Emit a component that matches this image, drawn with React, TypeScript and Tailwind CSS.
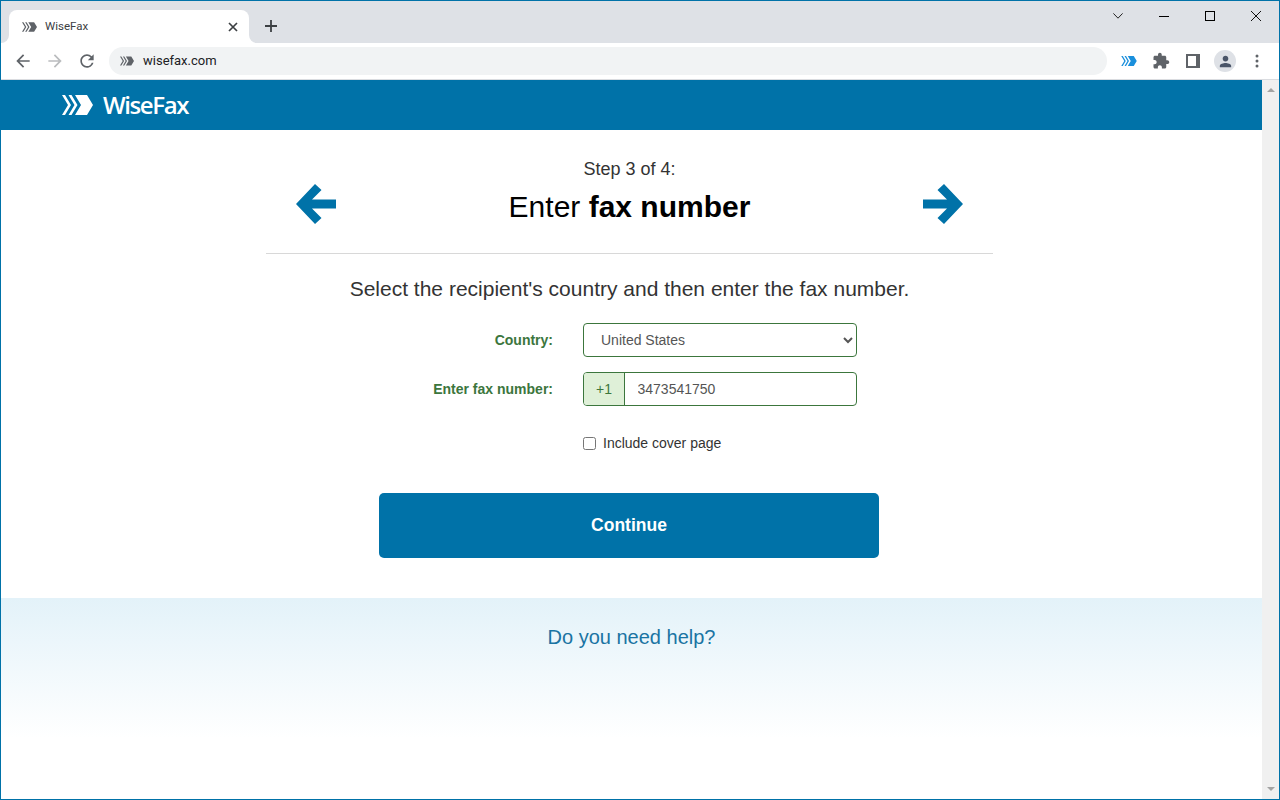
import { ReactNode } from 'react';

function Logo({ className, fill }: { className: string; fill: string }) {
  return (
    <svg viewBox="0 0 31 20" className={className} fill={fill}>
      <path d="M0 0h3l6 10-6 10H0l6-10z" />
      <path d="M6.5 0h3l6 10-6 10h-3l6-10z" />
      <path d="M13 0h12l6 10-6 10H13l6-10z" />
    </svg>
  );
}

function ToolIcon({ d, size, color }: { d: string; size: number; color: string }) {
  return (
    <svg viewBox="0 0 24 24" width={size} height={size} fill={color}>
      <path d={d} />
    </svg>
  );
}

function ToolSlot({ children }: { children: ReactNode }) {
  return <div className="w-[32px] h-[32px] shrink-0 flex items-center justify-center">{children}</div>;
}

function BigArrow({ flip }: { flip?: boolean }) {
  return (
    <svg viewBox="0 0 40 40" className={`mt-[25px] w-[40px] h-[40px] ${flip ? '-scale-x-100' : ''}`} fill="#0072a8">
      <path d="M0 20 19 0l6.500 6-9.500 9.500H40v9H16l9.500 9.500-6.500 6z" />
    </svg>
  );
}

const ARROW = 'M20 11H7.830l5.590-5.590L12 4l-8 8 8 8 1.410-1.410L7.830 13H20v-2z';
const ARROW_FWD = 'M4 11h12.170l-5.590-5.590L12 4l8 8-8 8-1.410-1.410L16.170 13H4v-2z';
const RELOAD =
  'M17.650 6.350A7.958 7.958 0 0 0 12 4c-4.420 0-7.990 3.580-7.990 8s3.570 8 7.990 8c3.730 0 6.840-2.550 7.730-6h-2.080A5.990 5.990 0 0 1 12 18c-3.310 0-6-2.690-6-6s2.690-6 6-6c1.660 0 3.140.690 4.220 1.780L13 11h7V4l-2.350 2.350z';
const PUZZLE =
  'M20.500 11H19V7c0-1.100-.900-2-2-2h-4V3.500C13 2.120 11.880 1 10.500 1S8 2.120 8 3.500V5H4c-1.100 0-1.990.900-1.990 2v3.800H3.500c1.490 0 2.700 1.210 2.700 2.700s-1.210 2.700-2.700 2.700H2V20c0 1.100.900 2 2 2h3.800v-1.500c0-1.490 1.210-2.700 2.700-2.700 1.490 0 2.700 1.210 2.700 2.700V22H17c1.100 0 2-.900 2-2v-4h1.500c1.380 0 2.500-1.120 2.500-2.500S21.880 11 20.500 11z';
const PERSON =
  'M12 12c2.210 0 4-1.790 4-4s-1.790-4-4-4-4 1.790-4 4 1.790 4 4 4zm0 2c-2.670 0-8 1.340-8 4v2h16v-2c0-2.660-5.330-4-8-4z';

export default function App() {
  return (
    <div className="h-[800px] w-[1280px] overflow-hidden border border-[#0072a8] bg-white font-['Liberation_Sans',sans-serif] flex flex-col">
      {/* tab strip */}
      <div className="h-[42px] shrink-0 bg-[#dee1e6] flex items-end pl-2">
        <div className="relative h-[33px] w-[240px] bg-white rounded-t-lg flex items-center pl-[13px] pr-[10px]">
          <div className="absolute -left-2 bottom-0 w-2 h-2 bg-white">
            <div className="w-full h-full bg-[#dee1e6] rounded-br-lg" />
          </div>
          <div className="absolute -right-2 bottom-0 w-2 h-2 bg-white">
            <div className="w-full h-full bg-[#dee1e6] rounded-bl-lg" />
          </div>
          <Logo className="w-[15px] h-[10px]" fill="#5f6368" />
          <span className="ml-[8px] text-[11.5px] text-[#3c4043] font-['Roboto',sans-serif]">WiseFax</span>
          <svg viewBox="0 0 10 10" className="ml-auto mr-[1px] w-[10px] h-[10px]" stroke="#3c4043" strokeWidth="1.700">
            <path d="M1 1l8 8M9 1l-8 8" />
          </svg>
        </div>
        <svg viewBox="0 0 12 12" className="ml-[16px] mb-[11px] w-[12px] h-[12px]" stroke="#3c4043" strokeWidth="1.800">
          <path d="M6 0v12M0 6h12" />
        </svg>
        <div className="ml-auto self-start flex items-center h-[30px]">
          <div className="w-[46px] flex justify-center">
            <svg viewBox="0 0 10 6" className="w-[10px] h-[6px]" fill="none" stroke="#222" strokeWidth="1">
              <path d="M.4.4 5 5.200 9.600.4" />
            </svg>
          </div>
          <div className="w-[46px] flex justify-center">
            <div className="w-[10px] h-px bg-black" />
          </div>
          <div className="w-[46px] flex justify-center">
            <div className="w-[10px] h-[10px] border border-black" />
          </div>
          <div className="w-[46px] flex justify-center">
            <svg viewBox="0 0 10 10" className="w-[10px] h-[10px]" stroke="#111" strokeWidth="1">
              <path d="M0 0l10 10M10 0 0 10" />
            </svg>
          </div>
        </div>
      </div>

      {/* toolbar */}
      <div className="h-[37px] shrink-0 bg-white border-b border-[#dadce0] flex items-center pl-[6px]">
        <ToolSlot><ToolIcon d={ARROW} size={20} color="#5f6368" /></ToolSlot>
        <ToolSlot><ToolIcon d={ARROW_FWD} size={20} color="#babcbe" /></ToolSlot>
        <ToolSlot><ToolIcon d={RELOAD} size={20} color="#5f6368" /></ToolSlot>
        <div className="ml-[6px] w-[998px] h-[28px] shrink-0 rounded-full bg-[#f1f3f4] flex items-center pl-[11px]">
          <Logo className="w-[14px] h-[10px]" fill="#5f6368" />
          <span className="ml-[9px] text-[13px] text-[#202124] font-['Roboto',sans-serif]">wisefax.com</span>
        </div>
        <div className="ml-[6px] flex">
          <ToolSlot><Logo className="w-[16px] h-[10px]" fill="#1a8fdc" /></ToolSlot>
          <ToolSlot><ToolIcon d={PUZZLE} size={18} color="#5f6368" /></ToolSlot>
          <ToolSlot><div className="w-[14px] h-[14px] border-[2px] border-r-[4px] border-[#5f6368] bg-white" /></ToolSlot>
          <ToolSlot>
            <div className="w-[22px] h-[22px] rounded-full bg-[#dee1e6] flex items-center justify-center">
              <ToolIcon d={PERSON} size={17} color="#4a5568" />
            </div>
          </ToolSlot>
          <ToolSlot>
            <svg viewBox="0 0 4 14" className="w-[4px] h-[14px]" fill="#5f6368">
              <circle cx="2" cy="2" r="1.500" />
              <circle cx="2" cy="7" r="1.500" />
              <circle cx="2" cy="12" r="1.500" />
            </svg>
          </ToolSlot>
        </div>
      </div>

      {/* page + scrollbar */}
      <div className="flex-1 flex min-h-0">
        <div className="flex-1 flex flex-col min-w-0">
          <header className="h-[50px] shrink-0 bg-[#0072a8] flex items-center pl-[61px]">
            <Logo className="w-[31px] h-[20px]" fill="#ffffff" />
            <span className="ml-[10px] text-[24px] font-semibold font-['Open_Sans',sans-serif] text-white tracking-[-1.400px]">WiseFax</span>
          </header>

          <main className="flex-1 flex flex-col">
            <div className="flex flex-col items-center pr-[4px]">
              <div className="w-[727px] mt-[29px] h-[95px] border-b border-[#d8d8d8] flex justify-between px-[30px]">
                <BigArrow />
                <div className="text-center">
                  <div className="text-[18px] leading-[20px] text-[#333]">Step 3 of 4:</div>
                  <h1 className="mt-[10px] text-[30px] leading-[36px] text-black">
                    Enter <b>fax number</b>
                  </h1>
                </div>
                <BigArrow flip />
              </div>

              <p className="mt-[23px] text-[21px] leading-[24px] text-[#333]">
                Select the recipient's country and then enter the fax number.
              </p>

              <div className="mt-[22px] w-[727px] text-[14px]">
                <div className="flex items-center">
                  <label className="w-[287px] text-right font-bold text-[#3c763d]">Country:</label>
                  <select
                    defaultValue="United States"
                    className="ml-[30px] w-[274px] h-[34px] rounded border border-[#3c763d] pl-[13px] pr-3 text-[#555] bg-white"
                  >
                    <option>United States</option>
                  </select>
                </div>
                <div className="mt-[15px] flex items-center">
                  <label className="w-[287px] text-right font-bold text-[#3c763d]">Enter fax number:</label>
                  <div className="ml-[30px] w-[274px] h-[34px] rounded border border-[#3c763d] flex items-center text-[#555] overflow-hidden">
                    <span className="w-[41px] h-full shrink-0 bg-[#dff0d8] border-r border-[#3c763d] flex items-center justify-center text-[#3c763d]">+1</span>
                    <input readOnly value="3473541750" className="min-w-0 flex-1 h-full pl-[12.500px] text-[#555] outline-none" />
                  </div>
                </div>
                <div className="mt-[29px] ml-[317px] flex items-center h-[16px]">
                  <input type="checkbox" className="w-[13px] h-[13px]" />
                  <span className="ml-[7px] text-[#333]">Include cover page</span>
                </div>
              </div>

              <button className="mt-[42px] mr-px w-[500px] h-[65px] rounded-[5px] bg-[#0072a8] text-white font-bold text-[17.500px]">
                Continue
              </button>
            </div>

            <div className="mt-[40px] w-full flex-1 bg-gradient-to-b from-[#e3f2f9] to-white to-[70%] pt-[27px] text-center">
              <span className="text-[20px] leading-[24px] text-[#1a74a3]">Do you need help?</span>
            </div>
          </main>
        </div>

        {/* scrollbar */}
        <div className="w-[17px] shrink-0 bg-[#f0f0f0] flex flex-col items-center justify-between py-[8px]">
          <div className="w-0 h-0 border-x-[4px] border-x-transparent border-b-[4px] border-b-[#a3a3a3]" />
          <div className="w-0 h-0 border-x-[4px] border-x-transparent border-t-[4px] border-t-[#a3a3a3]" />
        </div>
      </div>
    </div>
  );
}
